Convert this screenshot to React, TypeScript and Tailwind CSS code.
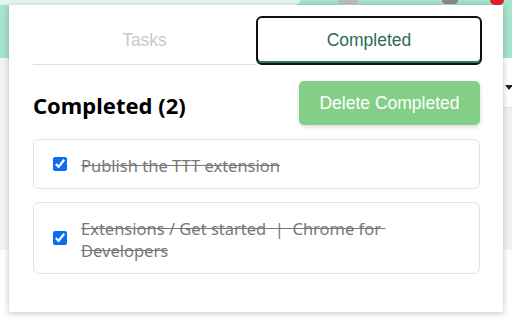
import { useState } from "react";

type Task = { id: string; title: string };

const completed: Task[] = [
  { id: "1", title: "Publish the TTT extension" },
  { id: "2", title: "Extensions / Get started  |  Chrome for Developers" },
];

export default function App() {
  const [tab, setTab] = useState<"Tasks" | "Completed">("Completed");

  return (
    <div className="relative h-[320px] w-[512px] overflow-hidden bg-white">
      {/* browser behind the popup */}
      <div className="flex h-[58px] flex-col bg-[#a7e3cd]">
        <div className="flex h-[5px] items-start">
          <div className="h-[5px] w-[300px] rounded-br-[6px] bg-[#e6f5ef]" />
          <div className="ml-[38px] h-[4px] w-[20px] rounded-b bg-[#bdbdbd]" />
          <div className="ml-[84px] h-[4px] w-[16px] rounded-b bg-[#8a8a8a]" />
          <div className="ml-[32px] h-[5px] w-[14px] rounded-b-full bg-[#e11d2a]" />
        </div>
      </div>
      <div className="flex h-[192px]">
        <div className="w-[9px] bg-[#f3f3f3]" />
        <div className="flex-1" />
        <div className="flex w-[9px] flex-col bg-white">
          <div className="mt-[27px] ml-[2px] h-0 w-0 border-x-[4px] border-t-[5px] border-x-transparent border-t-[#222]" />
          <div className="mt-[17px] h-px bg-[#ddd]" />
          <div className="flex-1 bg-[#f1f1f1]" />
        </div>
      </div>

      {/* popup */}
      <div className="absolute left-[9px] top-[5px] h-[307px] w-[494px] bg-white pl-[24px] pr-[21px] pt-[11px] shadow-[0_1px_6px_rgba(0,0,0,0.25)]">
        <div className="grid h-[49px] grid-cols-[223px_1fr] font-['Liberation_Sans',sans-serif] text-[17.5px]">
          <button
            type="button"
            onClick={() => setTab("Tasks")}
            className="border-b border-[#dddddd] text-[#c8c8c8]"
          >
            Tasks
          </button>
          <button
            type="button"
            onClick={() => setTab("Completed")}
            className={`rounded-[6px] border-2 border-[#111] text-[#2d6a5a] ${
              tab === "Completed" ? "shadow-[inset_0_-2px_0_#2f7a55]" : ""
            }`}
          >
            Completed
          </button>
        </div>

        <div className="mt-[16px] mr-[2px] flex items-center justify-between">
          <h2 className="pt-[4px] font-['Noto_Sans',sans-serif] text-[22px] font-bold text-black">
            Completed ({completed.length})
          </h2>
          <button
            type="button"
            className="h-[44px] w-[181px] rounded-[5px] bg-[#84cf88] font-['Liberation_Sans',sans-serif] text-[17.5px] text-white shadow-[0_2px_4px_rgba(0,0,0,0.15)]"
          >
            Delete Completed
          </button>
        </div>

        <ul className="mt-[14px] mr-[2px] flex flex-col gap-[13px]">
          {completed.map((t) => (
            <li
              key={t.id}
              className="flex items-center gap-[14px] rounded-[6px] border border-[#e3e3e3] py-[13px] pl-[19px] pr-[80px]"
            >
              <input
                type="checkbox"
                checked
                readOnly
                className="h-[14px] w-[14px] shrink-0 accent-[#0b6bf5]"
              />
              <span className="translate-y-[2px] whitespace-pre-wrap font-['Noto_Sans',sans-serif] text-[16.5px] leading-[22px] text-[#777777] line-through">
                {t.title}
              </span>
            </li>
          ))}
        </ul>
      </div>
    </div>
  );
}
